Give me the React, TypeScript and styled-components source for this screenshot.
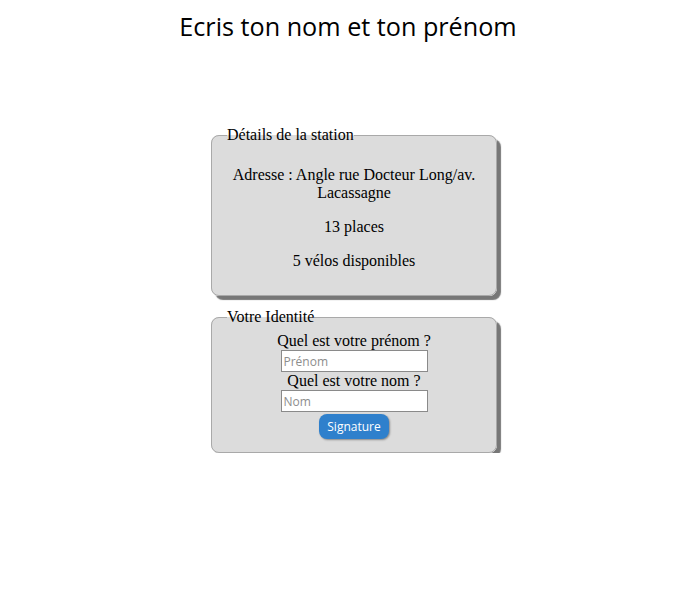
import React from 'react'
import styled, { createGlobalStyle } from 'styled-components'

const GlobalStyle = createGlobalStyle`
  body {
    margin: 8px;
    background: #ffffff;
    font-family: 'Liberation Serif', 'Times New Roman', serif;
    font-size: 16px;
    color: #000;
  }
`

const Title = styled.h1`
  margin: 0;
  font-family: 'Open Sans', 'Noto Sans', sans-serif;
  font-weight: 400;
  font-size: 25.2px;
  line-height: 36px;
  text-align: center;
`

const Column = styled.div`
  display: flex;
  flex-direction: column;
  align-items: center;
  gap: 12px;
  padding-left: 12px;
  margin-top: 82px;
`

const Fieldset = styled.fieldset`
  box-sizing: border-box;
  width: 286px;
  margin: 0;
  padding: 6px 12px 9px;
  background: #dcdcdc;
  border: 1px solid #a9a9a9;
  border-radius: 8px;
  box-shadow: 4px 4px 1px #777777;
  text-align: left;
`

const Legend = styled.legend`
  padding: 0;
  margin-left: 3px;
  line-height: 18px;
`

const Info = styled.p`
  margin: 16px 0;
  line-height: 18px;
  text-align: center;
`

const Form = styled.div`
  display: flex;
  flex-direction: column;
  align-items: center;
  padding-bottom: 4px;
`

const Label = styled.label`
  display: block;
  line-height: 18px;
`

const Input = styled.input`
  box-sizing: border-box;
  width: 147px;
  height: 22px;
  padding: 1px 2px;
  border: 1px solid #8a8a8a;
  background: #fff;
  font-family: 'Open Sans', 'Noto Sans', sans-serif;
  font-size: 12px;
  &::placeholder {
    color: #8d8d8d;
  }
`

const Button = styled.button`
  margin-top: 2px;
  height: 25px;
  padding: 0 8px;
  border: none;
  border-radius: 8px;
  background: #2f80cc;
  color: #ffffff;
  font-family: 'Open Sans', 'Noto Sans', sans-serif;
  font-size: 12px;
  box-shadow: 1px 1px 2px #888;
`

export default function App() {
  return (
    <>
      <GlobalStyle />
      <Title>Ecris ton nom et ton prénom</Title>
      <Column>
        <Fieldset>
          <Legend>Détails de la station</Legend>
          <Info>Adresse : Angle rue Docteur Long/av. Lacassagne</Info>
          <Info>13 places</Info>
          <Info>5 vélos disponibles</Info>
        </Fieldset>
        <Fieldset>
          <Legend>Votre Identité</Legend>
          <Form>
            <Label htmlFor="prenom">Quel est votre prénom ?</Label>
            <Input id="prenom" type="text" placeholder="Prénom" />
            <Label htmlFor="nom">Quel est votre nom ?</Label>
            <Input id="nom" type="text" placeholder="Nom" />
            <Button type="button">Signature</Button>
          </Form>
        </Fieldset>
      </Column>
    </>
  )
}
